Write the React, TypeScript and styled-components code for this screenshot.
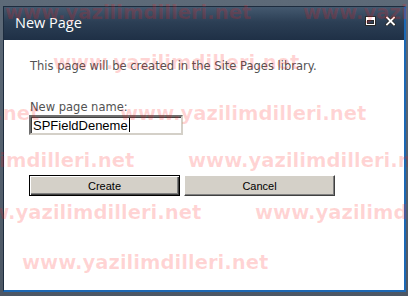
import React from 'react';
import styled, { createGlobalStyle } from 'styled-components';

const GlobalStyle = createGlobalStyle`
  html, body {
    margin: 0;
    padding: 0;
    width: 408px;
    height: 296px;
    overflow: hidden;
    background: linear-gradient(#5d6a78, #4c5764);
  }
`;

const Screen = styled.div`
  position: relative;
  width: 408px;
  height: 296px;
  padding: 6px 2px 4px 3px;
  box-sizing: border-box;
`;

const Dialog = styled.div`
  width: 403px;
  height: 286px;
  box-sizing: border-box;
  border: 1px solid #1d2c3e;
  border-right: 2px solid #1c68b4;
  border-bottom: 2px solid #1c68b4;
  background: #fff;
  display: flex;
  flex-direction: column;
`;

const TitleBar = styled.div`
  height: 33px;
  flex-shrink: 0;
  background: linear-gradient(#44596f 0%, #2c3f55 45%, #1f3046 100%);
  display: flex;
  align-items: center;
  padding: 0 8px 0 11px;
`;

const Title = styled.div`
  flex: 1;
  font-family: "Open Sans", "Noto Sans", sans-serif;
  font-size: 14.5px;
  color: #fff;
  margin-top: -2px;
`;

const TitleButtons = styled.div`
  display: flex;
  gap: 9px;
  align-items: center;
  margin-top: -5px;
`;

const Body = styled.div`
  flex: 1;
  padding: 19px 0 0 25px;
  font-family: "DejaVu Sans", Verdana, sans-serif;
  font-size: 11.5px;
  color: #525252;
`;

const Intro = styled.div`
  line-height: 14px;
  margin-bottom: 27px;
  padding-left: 1px;
`;

const Label = styled.div`
  line-height: 14px;
  margin-bottom: 1px;
  padding-left: 1px;
`;

const FakeInput = styled.div`
  width: 154px;
  height: 20px;
  box-sizing: border-box;
  border: 2px solid;
  border-color: #6f6f6f #d4d0c8 #d4d0c8 #6f6f6f;
  box-shadow: inset 1px 1px 0 #404040;
  display: flex;
  align-items: center;
  padding-left: 2px;
  font-family: "Liberation Sans", Arial, sans-serif;
  font-size: 13px;
  color: #000;
`;

const Caret = styled.span`
  display: inline-block;
  width: 1px;
  height: 14px;
  background: #000;
  margin-left: 1px;
`;

const Buttons = styled.div`
  display: flex;
  gap: 4px;
  margin-top: 40px;
`;

const Button = styled.button<{ $default?: boolean }>`
  width: 151px;
  height: 21px;
  box-sizing: border-box;
  padding: 0;
  margin: 0;
  background: #d4d0c8;
  font-family: "Liberation Sans", Tahoma, Arial, sans-serif;
  font-size: 11px;
  color: #000;
  border: 1px solid;
  border-color: ${p => (p.$default ? '#000' : '#ffffff #404040 #404040 #ffffff')};
  box-shadow: ${p =>
    p.$default
      ? 'inset 1px 1px 0 #fff, inset -1px -1px 0 #404040, inset -2px -2px 0 #808080'
      : 'inset -1px -1px 0 #808080'};
`;

const Watermarks = styled.div`
  position: absolute;
  inset: 0;
  pointer-events: none;
  overflow: hidden;
`;

const Mark = styled.div`
  position: absolute;
  white-space: nowrap;
  font-family: "DejaVu Sans", Verdana, sans-serif;
  font-weight: bold;
  font-size: 19.6px;
  line-height: 20px;
  color: rgba(255, 25, 25, 0.19);
`;

const marks = [
  [5, 3], [303, 3],
  [53, 53],
  [-207, 104], [120, 104],
  [-112, 151], [188, 151],
  [-45, 203], [255, 203],
  [22, 253],
];

function MaxIcon() {
  return (
    <svg width="11" height="10" viewBox="0 0 11 10">
      <rect x="0.5" y="0.5" width="10" height="9" fill="none" stroke="#2a2a2a" />
      <rect x="1.5" y="1.5" width="8" height="7" fill="none" stroke="#fff" />
      <rect x="2" y="2" width="7" height="2" fill="#fff" />
      <rect x="2.5" y="4.5" width="6" height="3" fill="none" stroke="#2a2a2a" />
    </svg>
  );
}

function CloseIcon() {
  return (
    <svg width="11" height="10" viewBox="0 0 11 10">
      <path d="M2 1.5 L9 8.5 M9 1.5 L2 8.5" stroke="#2a2a2a" strokeWidth="3.4" strokeLinecap="square" />
      <path d="M2 1.5 L9 8.5 M9 1.5 L2 8.5" stroke="#fff" strokeWidth="1.8" strokeLinecap="square" />
    </svg>
  );
}

export default function App() {
  return (
    <>
      <GlobalStyle />
      <Screen>
        <Dialog>
          <TitleBar>
            <Title>New Page</Title>
            <TitleButtons>
              <MaxIcon />
              <CloseIcon />
            </TitleButtons>
          </TitleBar>
          <Body>
            <Intro>This page will be created in the Site Pages library.</Intro>
            <Label>New page name:</Label>
            <FakeInput>
              SPFieldDeneme<Caret />
            </FakeInput>
            <Buttons>
              <Button $default>Create</Button>
              <Button>Cancel</Button>
            </Buttons>
          </Body>
        </Dialog>
        <Watermarks>
          {marks.map(([x, y], i) => (
            <Mark key={i} style={{ left: x, top: y }}>www.yazilimdilleri.net</Mark>
          ))}
        </Watermarks>
      </Screen>
    </>
  );
}
